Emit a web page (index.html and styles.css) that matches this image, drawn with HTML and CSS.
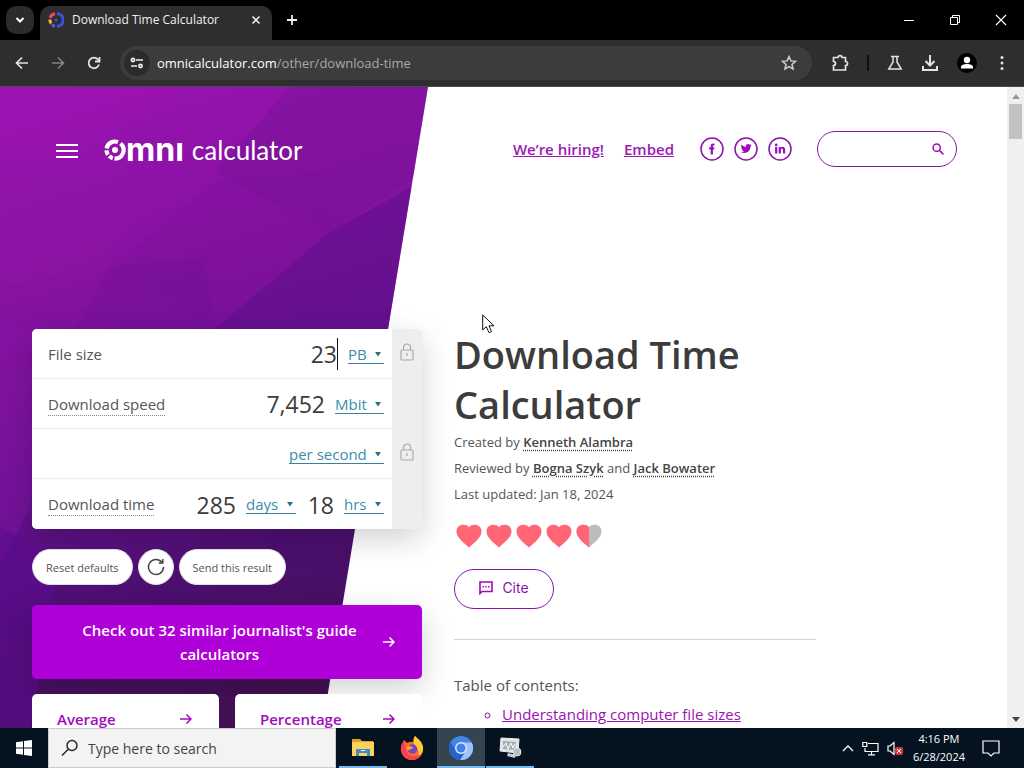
FILE: index.html
```html
<!DOCTYPE html>
<html lang="en">
<head>
<meta charset="utf-8">
<title>Download Time Calculator</title>
<link rel="stylesheet" href="styles.css">
</head>
<body>
<div class="desktop">
  <div class="tabstrip">
    <button class="tab-search" aria-label="Search tabs"><svg width="12" height="12" viewBox="0 0 12 12"><path d="M2.500 4l3.500 3.500L9.500 4" fill="none" stroke="#fff" stroke-width="2"/></svg></button>
    <div class="tab">
      <svg width="16" height="16" viewBox="0 0 16 16" fill="none" stroke-width="3"><path d="M2 6a6.300 6.300 0 0 1 5-4.300" stroke="#f0456a"/><path d="M9 1.700a6.300 6.300 0 0 1 0 12.600" stroke="#3d51e0"/><path d="M7 14.300a6.300 6.300 0 0 1-3-1.600" stroke="#4a62e8"/><path d="M3.200 11.500A6.300 6.300 0 0 1 1.800 7.500" stroke="#f5b43c"/><circle cx="8" cy="8" r="1.500" fill="#3d51e0" stroke="none"/></svg>
      <span class="tab-title">Download Time Calculator</span>
      <button class="plain" aria-label="Close tab"><svg width="10" height="10" viewBox="0 0 10 10"><path d="M1.500 1.500l7 7M8.500 1.500l-7 7" stroke="#e8e8e8" stroke-width="1.600"/></svg></button>
    </div>
    <button class="plain new-tab" aria-label="New tab"><svg width="12" height="12" viewBox="0 0 12 12"><path d="M6 1v10M1 6h10" stroke="#eee" stroke-width="1.800"/></svg></button>
    <div class="window-controls">
      <button class="plain" aria-label="Minimize"><svg width="12" height="12" viewBox="0 0 12 12"><path d="M1 6.500h10" stroke="#fff"/></svg></button>
      <button class="plain" aria-label="Restore"><svg width="12" height="12" viewBox="0 0 12 12" fill="none" stroke="#fff"><path d="M1.500 3.500h7v7h-7zM3.500 3.500v-2h7v7h-2"/></svg></button>
      <button class="plain" aria-label="Close"><svg width="12" height="12" viewBox="0 0 12 12"><path d="M1 1l10 10M11 1L1 11" stroke="#fff" stroke-width="1.200"/></svg></button>
    </div>
  </div>

  <div class="toolbar">
    <button class="plain tool" aria-label="Back"><svg width="16" height="16" viewBox="0 0 16 16" fill="none" stroke="#e3e3e3" stroke-width="1.700"><path d="M14 8H3M8 2.500L2.500 8 8 13.500"/></svg></button>
    <button class="plain tool" aria-label="Forward"><svg width="16" height="16" viewBox="0 0 16 16" fill="none" stroke="#858585" stroke-width="1.600"><path d="M2 8h11M8 2.500L13.500 8 8 13.500"/></svg></button>
    <button class="plain tool" aria-label="Reload"><svg width="16" height="16" viewBox="0 0 16 16" fill="none" stroke="#e3e3e3" stroke-width="1.800"><path d="M13 9.500A5.300 5.300 0 1 1 12 4.500L13.500 6"/><path d="M13.500 2v4.500H9"/></svg></button>
    <div class="omnibox">
      <button class="site-info" aria-label="Site information"><svg width="14" height="14" viewBox="0 0 14 14" fill="none" stroke="#eee" stroke-width="1.700"><path d="M6 4h7M1 10h6"/><circle cx="3" cy="4" r="1.600"/><circle cx="10.500" cy="10" r="1.600"/></svg></button>
      <div class="url"><span class="host">omnicalculator.com</span>/other/download-time</div>
      <button class="plain" aria-label="Bookmark"><svg width="16" height="16" viewBox="0 0 16 16" fill="none" stroke="#d0d0d0" stroke-width="1.500"><path d="M8 1.600l1.900 4.300 4.700.4-3.600 3.100 1.100 4.600L8 11.600 3.900 14 5 9.400 1.400 6.300l4.700-.4z"/></svg></button>
    </div>
    <div class="toolbar-end">
      <button class="plain" aria-label="Extensions"><svg width="18" height="18" viewBox="0 0 18 18" fill="none" stroke="#e3e3e3" stroke-width="1.700"><path d="M2.500 3.500H7a2 1.800 0 0 1 4 0h3.500V7.500a2 2 0 0 1 0 4v4.500h-12v-4.500a2 2 0 0 0 0-4z"/></svg></button>
      <span class="tool-divider"></span>
      <button class="plain" aria-label="Labs"><svg width="16" height="16" viewBox="0 0 16 16" fill="none" stroke="#e3e3e3" stroke-width="1.500"><path d="M4 1.500h8M6 2v5L1.800 14h12.400L10 7V2"/></svg></button>
      <button class="plain" aria-label="Downloads"><svg width="18" height="18" viewBox="0 0 18 18" fill="none" stroke="#e3e3e3" stroke-width="2"><path d="M9 1v10M4.500 7L9 11.500 13.500 7M2 12v4h14v-4"/></svg></button>
      <button class="plain" aria-label="Profile"><svg width="20" height="20" viewBox="0 0 20 20"><circle cx="10" cy="10" r="10"/><circle cx="10" cy="7" r="3.200" fill="#fff"/><path d="M4 15.500v-1.500c0-4 12-4 12 0v1.500z" fill="#fff"/></svg></button>
      <button class="plain" aria-label="Menu"><svg width="14" height="16" viewBox="0 0 14 16" fill="#e3e3e3"><circle cx="7" cy="2.500" r="1.500"/><circle cx="7" cy="8" r="1.500"/><circle cx="7" cy="13.500" r="1.500"/></svg></button>
    </div>
  </div>

  <div class="viewport">
    <div class="page">
      <svg class="backdrop" width="430" height="642" viewBox="0 0 430 642" aria-hidden="true">
        <defs>
          <linearGradient id="base" gradientUnits="userSpaceOnUse" x1="60" y1="0" x2="260" y2="642"><stop offset="0" stop-color="#9a13b3"/><stop offset=".3" stop-color="#8412a0"/><stop offset=".58" stop-color="#65118f"/><stop offset=".75" stop-color="#4c0f70"/><stop offset="1" stop-color="#42104e"/></linearGradient>
          <clipPath id="slant"><path d="M0 0H428L322 642H0z"/></clipPath>
        </defs>
        <g clip-path="url(#slant)">
          <path d="M0 0H430V642H0z" fill="url(#base)"/>
          <path d="M290 0H430V80L330 145 215 85z" fill="#70148f" opacity=".35"/>
          <path d="M0 0h190L60 75 0 70z" fill="#ac15b8" opacity=".2"/>
          <path d="M430 90L330 145 215 242H430z" fill="#541086" opacity=".45"/>
          <path d="M330 85L215 95 110 180 215 242 330 145z" fill="#7a119a" opacity=".3"/>
          <path d="M110 180L75 243H215L205 170z" fill="#6d1294" opacity=".3"/>
          <path d="M0 80v120l100-20 70-90z" fill="#9018a5" opacity=".3"/>
          <path d="M0 240h50l-20 180L0 480z" fill="#8c15aa" opacity=".35"/>
          <path d="M0 440l60 30L30 642H0z" fill="#5c0c90" opacity=".6"/>
        </g>
      </svg>

      <header class="site-header">
        <button class="plain menu" aria-label="Open menu"><svg width="22" height="16" viewBox="0 0 22 16"><path d="M0 2h22M0 8h22M0 14h22" stroke="#fff" stroke-width="2"/></svg></button>
        <a class="logo" href="#" aria-label="Omni Calculator">
          <svg width="22" height="22" viewBox="0 0 22 22" fill="none" stroke="#fff" stroke-width="4.200"><path d="M2.600 9.500A8.500 8.500 0 0 1 14 3.100"/><path d="M16.500 4.500A8.500 8.500 0 0 1 10.500 19.500"/><path d="M8.800 19.200a8.500 8.500 0 0 1-3.600-2.100"/><path d="M4 15.800a8.500 8.500 0 0 1-1.500-4.500"/><circle cx="11" cy="11" r="3" fill="#fff" stroke="none"/></svg>
          <span class="logo-bold">mnı</span><span class="logo-light">calculator</span>
        </a>
        <nav class="site-nav">
          <a href="#">We’re hiring!</a>
          <a href="#">Embed</a>
          <div class="social">
            <a href="#" aria-label="Facebook"><svg width="24" height="24" viewBox="0 0 24 24"><circle cx="12" cy="12" r="11" fill="#fff" stroke="#8c12a8" stroke-width="1.500"/><path d="M10.700 17.500v-5H9.200v-2.200h1.500V9c0-1.900 1-2.700 3.700-2.400v2c-1.200 0-1.500.1-1.500.8v.9h1.500l-.3 2.200h-1.200v5z" fill="#9c0cb8"/></svg></a>
            <a href="#" aria-label="Twitter"><svg width="24" height="24" viewBox="0 0 24 24"><circle cx="12" cy="12" r="11" fill="#fff" stroke="#8c12a8" stroke-width="1.500"/><path d="M7.500 7.600c1.300 1.500 2.800 2.200 4.300 2.300-.3-2.800 2.600-3.600 3.900-2.200l1.500-.5-.7 1.300 1.200-.2-1.200 1.300c0 5-4.900 7.900-9.500 5.600 1.300 0 2.300-.3 3-.9-1.100-.1-1.700-.7-2-1.500h.9c-1.100-.4-1.600-1.100-1.700-2.200l.9.200c-1-.9-1.200-2-.6-3.200z" fill="#9c0cb8"/></svg></a>
            <a href="#" aria-label="LinkedIn"><svg width="24" height="24" viewBox="0 0 24 24"><circle cx="12" cy="12" r="11" fill="#fff" stroke="#8c12a8" stroke-width="1.500"/><g fill="#9c0cb8"><circle cx="8.200" cy="7.900" r="1.300"/><path d="M7.100 10h2.200v6.500H7.100zM10.700 10h2.100v.9c1-1.700 4.400-1.400 4.400 1.700v3.900H15v-3.400c0-1.800-2.100-1.700-2.100 0v3.400h-2.200z"/></g></svg></a>
          </div>
          <div class="site-search">
            <input type="search" aria-label="Search calculators">
            <svg width="12" height="12" viewBox="0 0 12 12" fill="none" stroke="#9c0cb8" stroke-width="1.500"><circle cx="4.700" cy="4.700" r="3.600"/><path d="M7.400 7.400l4 4"/></svg>
          </div>
        </nav>
      </header>

      <main class="columns">
        <section class="calc-column">
          <form class="calc">
            <div class="calc-rows">
              <div class="row"><label for="size">File size</label><input id="size" class="value w2 focused" value="23"><span class="unit"><select aria-label="File size unit"><option>PB</option></select><svg class="caret" width="6" height="6" viewBox="0 0 6 6"><path d="M0 1h6L3 5.500z"/></svg></span></div>
              <div class="row"><label class="hint" for="speed">Download speed</label><input id="speed" class="value w4" value="7,452"><span class="unit"><select aria-label="Speed unit"><option>Mbit</option></select><svg class="caret" width="6" height="6" viewBox="0 0 6 6"><path d="M0 1h6L3 5.500z"/></svg></span></div>
              <div class="row"><span class="unit"><select aria-label="Speed period"><option>per second</option></select><svg class="caret" width="6" height="6" viewBox="0 0 6 6"><path d="M0 1h6L3 5.500z"/></svg></span></div>
              <div class="row"><label class="hint" for="days">Download time</label><input id="days" class="value w3" value="285"><span class="unit"><select aria-label="Time unit"><option>days</option></select><svg class="caret" width="6" height="6" viewBox="0 0 6 6"><path d="M0 1h6L3 5.500z"/></svg></span><input aria-label="Hours" class="value w2" value="18"><span class="unit"><select aria-label="Second time unit"><option>hrs</option></select><svg class="caret" width="6" height="6" viewBox="0 0 6 6"><path d="M0 1h6L3 5.500z"/></svg></span></div>
            </div>
            <div class="locks">
              <button type="button" class="plain" aria-label="Lock file size"><svg width="14" height="18" viewBox="0 0 14 18" fill="none" stroke="#aaa" stroke-width="1.200"><rect x="1" y="7" width="12" height="10" rx="1"/><path d="M3.500 7V4.500a3.500 3.500 0 0 1 7 0V7M7 10v3"/></svg></button>
              <button type="button" class="plain" aria-label="Lock download speed"><svg width="14" height="18" viewBox="0 0 14 18" fill="none" stroke="#aaa" stroke-width="1.200"><rect x="1" y="7" width="12" height="10" rx="1"/><path d="M3.500 7V4.500a3.500 3.500 0 0 1 7 0V7M7 10v3"/></svg></button>
            </div>
          </form>
          <div class="actions">
            <button class="pill">Reset defaults</button>
            <button class="pill round" aria-label="Refresh"><svg width="18" height="18" viewBox="0 0 18 18" fill="none" stroke="#444" stroke-width="1.500"><path d="M16.500 9A7.500 7.500 0 1 1 15 4.500"/><path d="M15.800 1v4h-4"/></svg></button>
            <button class="pill">Send this result</button>
          </div>
          <a class="banner" href="#"><span>Check out 32 similar journalist's guide calculators</span><svg width="12" height="12" viewBox="0 0 12 12" fill="none" stroke="#fff" stroke-width="1.500"><path d="M0 6h11M6.500 1.500L11 6l-4.500 4.500"/></svg></a>
          <div class="related">
            <a href="#"><span>Average</span><svg width="12" height="12" viewBox="0 0 12 12" fill="none" stroke="#a00cb8" stroke-width="1.500"><path d="M0 6h11M6.500 1.500L11 6l-4.500 4.500"/></svg></a>
            <a href="#"><span>Percentage</span><svg width="12" height="12" viewBox="0 0 12 12" fill="none" stroke="#a00cb8" stroke-width="1.500"><path d="M0 6h11M6.500 1.500L11 6l-4.500 4.500"/></svg></a>
          </div>
        </section>

        <article class="article">
          <h1>Download Time Calculator</h1>
          <p class="meta">Created by <a href="#">Kenneth Alambra</a></p>
          <p class="meta">Reviewed by <a href="#">Bogna Szyk</a> and <a href="#">Jack Bowater</a></p>
          <p class="meta">Last updated: Jan 18, 2024</p>
          <svg class="hearts" width="150" height="26" viewBox="0 0 150 26" role="img" aria-label="Rating 4.5 of 5">
            <defs><path id="heart" d="M15 24.500C11 20.500 2.500 15 2.500 8.500 2.500 1.500 11 0 15 4.200 19 0 27.500 1.500 27.500 8.500 27.500 15 19 20.500 15 24.500z"/><clipPath id="half"><path d="M0 0h15v26H0z"/></clipPath></defs>
            <g fill="#ff6574"><use href="#heart"/><use href="#heart" x="30"/><use href="#heart" x="60"/><use href="#heart" x="90"/></g>
            <use href="#heart" x="120" fill="#bbb"/><use href="#heart" x="120" fill="#ff6574" clip-path="url(#half)"/>
          </svg>
          <button class="cite"><svg width="14" height="14" viewBox="0 0 14 14" fill="none" stroke="#9c0cb8" stroke-width="1.600"><path d="M1 12.500V1h12v9.500H3z"/><path d="M3.500 5.800h1.500M6.200 5.800h1.500M9 5.800h1.500"/></svg>Cite</button>
          <hr>
          <p class="toc-title">Table of contents:</p>
          <ul class="toc"><li><a href="#">Understanding computer file sizes</a></li></ul>
        </article>
      </main>
    </div>
    <div class="scrollbar"><svg width="8" height="5" viewBox="0 0 8 5"><path d="M4 0l4 5H0z" fill="#999"/></svg><span class="thumb"></span><svg width="8" height="5" viewBox="0 0 8 5"><path d="M4 5l4-5H0z" fill="#444"/></svg></div>
    <svg class="pointer" width="13" height="20" viewBox="0 0 13 20"><path d="M.7 1v15l3.600-3.300L7 18.700l2.500-1.100L7 11.800h5z" fill="#fff" stroke="#111"/></svg>
  </div>

  <div class="taskbar">
    <button class="plain start" aria-label="Start"><svg width="16" height="16" viewBox="0 0 16 16" fill="#fff"><path d="M0 2.200L7 1.200v6.300H0zM8 1l8-1v7.500H8zM0 8.500h7v6.300l-7-1zM8 8.500h8V16l-8-1z"/></svg></button>
    <label class="task-search"><svg width="18" height="18" viewBox="0 0 18 18" fill="none" stroke="#222" stroke-width="1.400"><circle cx="11" cy="6.500" r="5"/><path d="M7.300 10.200L1 16.500"/></svg><input type="text" placeholder="Type here to search"></label>
    <div class="apps">
      <button class="app open" aria-label="File Explorer"><svg width="22" height="20" viewBox="0 0 22 20"><path d="M0 1h8l2 2h11v3H0z" fill="#e0a030"/><path d="M0 4h22v14H0z" fill="#fbd35c"/><path d="M4 18v-7h14v7h-3v-3H7v3z" fill="#3b8fc8"/><path d="M9 12h4v1H9z" fill="#fff"/></svg></button>
      <button class="app" aria-label="Firefox"><svg width="24" height="24" viewBox="0 0 24 24"><path d="M4 4l3 3c3-2 5-1 6-1 1-2 0-4 2-6 2 3 7 5 8 11 1 7-4 13-11 13S0 18 1 11c.4-3 2-4 3-7z" fill="#ff6b26"/><path d="M15 0c3 3 7 5 8 11 .5 5-2 8-5 10 2-6 0-8-3-11-2-3-2-7 0-10z" fill="#ffca32"/><path d="M1 12c0 7 5 12 11 12 4 0 8-2 9-6-5 4-14 3-15-4L4 4c-1 3-3 4-3 8z" fill="#ff3c55"/><circle cx="12.500" cy="13" r="4.700" fill="#7045c8"/><path d="M6 11c3-2 5 0 7 0 0 2-3 2-4 3-2 0-3-1-3-3z" fill="#ffa42c"/></svg></button>
      <button class="app open active" aria-label="Chromium"><svg width="24" height="24" viewBox="0 0 24 24"><circle cx="12" cy="12" r="12" fill="#4285e8"/><path d="M12 6.500h10.700A12 12 0 0 1 11 24l5.500-9z" fill="#9cc3fb"/><path d="M1.600 6A12 12 0 0 0 11 24l5.500-9-9.300 0z" fill="#2563c9"/><circle cx="12" cy="12" r="6" fill="#d8e8fd"/><circle cx="12" cy="12" r="4.500" fill="#3f83ea"/></svg></button>
      <button class="app open" aria-label="System Monitor"><svg width="24" height="22" viewBox="0 0 24 22"><path d="M3 1l18 1-1 14-18-2z" fill="#dfe5e9" stroke="#eee"/><path d="M5 4l13 1-1 8-12-1z" fill="#a3b0b9"/><path d="M5 10l3-4 2 6 3-6 2 5 2-4" stroke="#fff" fill="none"/><path d="M10 16l8 2-1 3-8-2z" fill="#ccc"/><circle cx="19" cy="15" r="4" fill="#b5c0c7" stroke="#ddd"/></svg></button>
    </div>
    <div class="tray">
      <svg width="12" height="8" viewBox="0 0 12 8"><path d="M1 7l5-5 5 5" fill="none" stroke="#fff" stroke-width="1.300"/></svg>
      <svg width="17" height="15" viewBox="0 0 17 15" fill="none" stroke="#fff" stroke-width="1.200"><path d="M6 2.500h10v8H3V7M9.500 10.500v3M6 13.800h7"/><path d="M.8 1.500h4v4h-4z"/></svg>
      <svg width="16" height="15" viewBox="0 0 16 15"><path d="M1 5h2l4-3.500v12L3 10H1z" fill="none" stroke="#fff" stroke-width="1.200"/><rect x="8" y="6" width="8" height="8" rx="2" fill="#d8333f"/><path d="M10 8l4 4M14 8l-4 4" stroke="#fff"/></svg>
      <div class="clock"><span>4:16 PM</span><span>6/28/2024</span></div>
      <svg width="18" height="17" viewBox="0 0 18 17"><path d="M1 1h16v12h-5l-3 3-3-3H1z" fill="none" stroke="#fff" stroke-width="1.200"/></svg>
    </div>
  </div>
</div>
</body>
</html>
```
FILE: styles.css
```css
* { box-sizing: border-box; }
body { margin: 0; font-family: "Open Sans", "Noto Sans", sans-serif; font-size: 15px; color: #555; }
button, input, select { font: inherit; color: inherit; }
svg { display: block; flex: none; }
.plain { display: flex; align-items: center; justify-content: center; padding: 0; border: 0; background: none; }
.desktop { display: flex; flex-direction: column; height: 100vh; overflow: hidden; }

/* browser chrome */
.tabstrip { display: flex; align-items: center; height: 40px; flex: none; padding-left: 6px; background: #000; }
.tab-search { display: flex; align-items: center; justify-content: center; width: 28px; height: 28px; padding: 0; border: 0; border-radius: 10px; background: #2b2b2b; }
.tab { display: flex; align-items: center; align-self: flex-end; gap: 8px; width: 232px; height: 34px; margin-left: 6px; padding: 0 11px 6px 8px; border-radius: 10px 10px 0 0; background: #2e2e2e; }
.tab-title { flex: 1; font-size: 12px; line-height: 16px; color: #f0f0f0; white-space: nowrap; }
.new-tab { margin-left: 14px; }
.window-controls { display: flex; margin-left: auto; }
.window-controls button { width: 46px; height: 32px; }
.toolbar { display: flex; align-items: center; height: 47px; flex: none; padding: 0 15px 0 4px; border-bottom: 1px solid #4a4a4a; background: #2e2e2e; }
.tool { width: 36px; height: 34px; }
.omnibox { display: flex; align-items: center; flex: 1; height: 34px; margin-left: 8px; padding: 0 15px 0 4px; border-radius: 17px; background: #3c3c3c; }
.site-info { display: flex; align-items: center; justify-content: center; width: 26px; height: 26px; padding: 0; border: 0; border-radius: 50%; background: #2b2b2b; }
.url { flex: 1; margin-left: 7px; font-size: 13px; color: #a9a9a9; }
.host { color: #fff; }
.toolbar-end { display: flex; align-items: center; gap: 18px; margin-left: 19px; }
.tool-divider { width: 2px; height: 16px; background: #111; }

/* page */
.viewport { position: relative; display: flex; flex: 1; min-height: 0; overflow: hidden; background: #fff; }
.page { position: relative; flex: 1; min-width: 0; overflow: hidden; }
.backdrop { position: absolute; top: 0; left: 0; }
.site-header { position: relative; display: flex; align-items: center; height: 36px; margin-top: 44px; padding: 0 50px 0 56px; }
.menu { padding-top: 3px; }
.logo { display: flex; align-items: center; margin-left: 26px; padding-top: 2px; color: #fff; text-decoration: none; }
.logo-bold { font: 700 32px/36px Inter, sans-serif; }
.logo-light { margin-left: 8px; font: 400 26px/36px Lato, sans-serif; }
.site-nav { display: flex; align-items: center; margin-left: auto; gap: 20px; font-size: 15px; font-weight: 600; }
.site-nav a { color: #9c18b4; }
.social { display: flex; gap: 10px; margin-left: 6px; }
.site-search { display: flex; align-items: center; width: 140px; height: 36px; margin-left: 5px; padding: 0 12px 0 16px; border: 1px solid #8c12a8; border-radius: 18px; }
.site-search input { flex: 1; min-width: 0; border: 0; outline: 0; background: none; }
.columns { position: relative; display: grid; grid-template-columns: 390px minmax(0, 362px); gap: 32px; margin-top: 162px; padding-left: 32px; }

.calc { display: flex; border-radius: 5px; overflow: hidden; background: #eee; box-shadow: 0 10px 30px rgba(0, 0, 0, .18); }
.calc-rows { flex: 1; background: #fff; }
.row { display: flex; align-items: center; justify-content: flex-end; gap: 10px; height: 50px; padding: 1px 8px 0 16px; border-bottom: 1px solid #eee; }
.row:last-child { border-bottom: 0; }
.row label { margin-right: auto; line-height: 22px; }
.hint { border-bottom: 1px dotted #888; }
.value { padding: 0; border: 0; outline: 0; background: none; font-size: 23px; text-align: right; color: #3c3c3c; }
.w2 { width: 28px; }
.w3 { width: 42px; }
.w4 { width: 64px; }
.focused { height: 32px; border-right: 1px solid #111; }
.unit { display: flex; align-items: center; gap: 8px; padding-right: 3px; border-bottom: 1px solid #3d7f9c; color: #3d8bae; }
.unit select { appearance: none; padding: 0; border: 0; background: none; line-height: 18px; }
.caret { fill: #2b6f86; }
.locks { display: flex; flex-direction: column; gap: 82px; width: 30px; padding-top: 14px; }
.actions { display: flex; gap: 5px; margin-top: 20px; }
.pill { height: 36px; padding: 0 13px; border: 1px solid #ddd; border-radius: 18px; background: #fff; font-size: 11px; color: #555; }
.round { display: flex; align-items: center; justify-content: center; width: 36px; padding: 0; }
.banner { display: flex; align-items: center; margin-top: 20px; padding: 13px 27px 13px 32px; border-radius: 5px; background: #b000d8; box-shadow: 0 10px 30px rgba(0, 0, 0, .18); color: #fff; font-weight: 600; line-height: 24px; text-align: center; text-decoration: none; }
.banner span { flex: 1; padding: 0 16px 0 8px; }
.related { display: grid; grid-template-columns: 1fr 1fr; gap: 16px; margin-top: 15px; }
.related a { display: flex; align-items: center; justify-content: space-between; height: 74px; padding: 0 27px 24px 25px; border-radius: 5px; background: #fff; color: #a00cb8; font-weight: 600; text-decoration: none; }

.article h1 { margin: 0; font-size: 38px; font-weight: 600; line-height: 50px; color: #3c3c3c; }
.meta { margin: 0; font-size: 13px; line-height: 26px; }
.meta a { color: #444; font-weight: 600; text-decoration: underline dotted; text-underline-offset: 3px; }
.hearts { margin-top: 16px; }
.cite { display: flex; align-items: center; justify-content: center; gap: 9px; width: 100px; height: 40px; margin-top: 20px; padding-bottom: 4px; border: 1px solid #8c12a8; border-radius: 20px; background: #fff; color: #8c12a8; font: 14px Inter, sans-serif; }
.article hr { margin: 30px 0 32px; border: 0; border-top: 1px solid #d5d5d5; }
.toc-title { margin: 0; line-height: 26px; }
.toc { margin: 3px 0 0; padding-left: 48px; list-style: circle; line-height: 26px; color: #8c12a8; }
.toc a { color: #9a12b0; }
.scrollbar { display: flex; flex-direction: column; align-items: center; width: 17px; padding: 7px 0 6px; background: #f0f0f0; }
.thumb { width: 13px; height: 35px; margin: 5px 0 auto; background: #c2c2c2; }
.pointer { position: absolute; left: 482px; top: 227px; }

/* taskbar */
.taskbar { display: flex; height: 40px; flex: none; background: #04131f; color: #fff; }
.start { width: 48px; }
.task-search { display: flex; align-items: center; gap: 9px; width: 288px; padding-left: 12px; border: 1px solid #ccc; background: #f3f3f3; }
.task-search input { flex: 1; min-width: 0; padding: 0; border: 0; outline: 0; background: none; font-size: 14px; color: #444; }
.task-search input::placeholder { color: #444; opacity: 1; }
.apps { display: flex; gap: 1px; margin-left: 3px; }
.app { display: flex; align-items: center; justify-content: center; width: 48px; padding: 2px 0 0; border: 0; border-bottom: 2px solid transparent; background: none; }
.open { border-color: #76b9ed; }
.active { background: #35454f; }
.tray { display: flex; align-items: center; gap: 8px; margin-left: auto; padding-right: 24px; }
.clock { display: flex; flex-direction: column; margin: 0 9px 0 2px; font-size: 11px; line-height: 18px; text-align: center; }
```
